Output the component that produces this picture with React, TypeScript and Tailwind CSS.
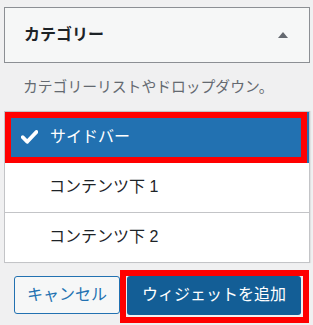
import React from 'react'

const font = { fontFamily: '"Liberation Sans", "Noto Sans CJK JP", sans-serif' }

const CheckIcon = () => (
  <svg width="17" height="14" viewBox="0 0 17 14" className="shrink-0">
    <path d="M1.8 7.2 L6.2 11.8 L15.4 2" fill="none" stroke="#ffffff" strokeWidth="3.8" strokeLinecap="round" strokeLinejoin="round" />
  </svg>
)

const App: React.FC = () => {
  const items = ['コンテンツ下 1', 'コンテンツ下 2']

  return (
    <div className="w-[313px] h-[325px] bg-[#f0f0f1] pl-[4px] pt-[7px] overflow-hidden" style={font}>
      {/* widget header */}
      <div className="w-[306px] h-[56px] border border-[#8c8f94] bg-[#f6f7f7] flex items-center justify-between pl-[19px] pr-[21px]">
        <h3 className="text-[16px] font-bold text-[#1d2327] leading-none">カテゴリー</h3>
        <span className="w-0 h-0 border-l-[5px] border-r-[5px] border-b-[6px] border-l-transparent border-r-transparent border-b-[#646970]" />
      </div>

      <p className="mt-[17px] pl-[19px] text-[14.8px] leading-none text-[#646970]">
        カテゴリーリストやドロップダウン。
      </p>

      {/* sidebar list */}
      <div className="mt-[16px] w-[306px] border border-[#c3c4c7] bg-white shadow-[1px_0_1px_rgba(0,0,0,0.06)]">
        <div className="relative h-[51px] bg-[#2271b1] flex items-center pl-[16px] text-white">
          <CheckIcon />
          <span className="ml-[12px] text-[16px] leading-none">サイドバー</span>
          <span className="absolute left-0 top-0 w-[302px] h-[51px] border-[6px] border-[#ff0000] pointer-events-none" />
        </div>
        {items.map((label, i) => (
          <div
            key={label}
            className={
              i === 0
                ? 'h-[50px] border-b border-[#c3c4c7] flex items-center pl-[44px]'
                : 'h-[49px] flex items-center pl-[44px]'
            }
          >
            <span className="text-[16px] leading-none text-[#1d2327]">{label}</span>
          </div>
        ))}
      </div>

      {/* actions */}
      <div className="mt-[13px] pl-[10px] flex gap-[7px]">
        <button className="w-[106px] h-[38px] rounded-[3px] border border-[#2271b1] bg-[#f6f7f7] text-[#2271b1] text-[16px] leading-none">
          キャンセル
        </button>
        <div className="relative">
          <button className="w-[174px] h-[39px] rounded-[3px] bg-[#135e96] text-white text-[16px] leading-none">
            ウィジェットを追加
          </button>
          <span className="absolute -left-[7px] -top-[6px] -right-[8px] -bottom-[8px] border-[6px] border-[#ff0000] pointer-events-none" />
        </div>
      </div>
    </div>
  )
}

export default App
